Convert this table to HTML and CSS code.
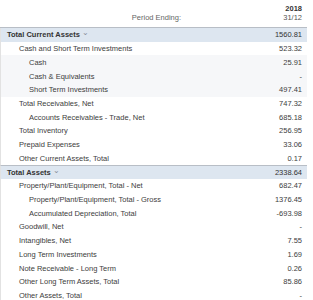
FILE: index.html
```html
<!DOCTYPE html>
<html>
<head>
<meta charset="utf-8">
<link rel="stylesheet" href="styles.css">
</head>
<body>
<div class="table">
  <div class="head">
    <div class="period">Period Ending:</div>
    <div class="val"><div class="year">2018</div><div class="date">31/12</div></div>
  </div>
  <div class="row total first"><div class="label l0">Total Current Assets <span class="chev">&#8964;</span></div><div class="val">1560.81</div></div>
  <div class="row"><div class="label l1">Cash and Short Term Investments</div><div class="val">523.32</div></div>
  <div class="row tint"><div class="label l2">Cash</div><div class="val">25.91</div></div>
  <div class="row tint"><div class="label l2">Cash &amp; Equivalents</div><div class="val">-</div></div>
  <div class="row tint"><div class="label l2">Short Term Investments</div><div class="val">497.41</div></div>
  <div class="row"><div class="label l1">Total Receivables, Net</div><div class="val">747.32</div></div>
  <div class="row"><div class="label l2">Accounts Receivables - Trade, Net</div><div class="val">685.18</div></div>
  <div class="row"><div class="label l1">Total Inventory</div><div class="val">256.95</div></div>
  <div class="row"><div class="label l1">Prepaid Expenses</div><div class="val">33.06</div></div>
  <div class="row"><div class="label l1">Other Current Assets, Total</div><div class="val">0.17</div></div>
  <div class="row total"><div class="label l0">Total Assets <span class="chev">&#8964;</span></div><div class="val">2338.64</div></div>
  <div class="row"><div class="label l1">Property/Plant/Equipment, Total - Net</div><div class="val">682.47</div></div>
  <div class="row"><div class="label l2">Property/Plant/Equipment, Total - Gross</div><div class="val">1376.45</div></div>
  <div class="row"><div class="label l2">Accumulated Depreciation, Total</div><div class="val">-693.98</div></div>
  <div class="row"><div class="label l1">Goodwill, Net</div><div class="val">-</div></div>
  <div class="row"><div class="label l1">Intangibles, Net</div><div class="val">7.55</div></div>
  <div class="row"><div class="label l1">Long Term Investments</div><div class="val">1.69</div></div>
  <div class="row"><div class="label l1">Note Receivable - Long Term</div><div class="val">0.26</div></div>
  <div class="row"><div class="label l1">Other Long Term Assets, Total</div><div class="val">85.86</div></div>
  <div class="row"><div class="label l1">Other Assets, Total</div><div class="val">-</div></div>
</div>
</body>
</html>
```
FILE: styles.css
```css
html, body {
  margin: 0;
  padding: 0;
  background: #fff;
}
body {
  font-family: "Liberation Sans", Arial, sans-serif;
  font-size: 7.5px;
  color: #3d3d3d;
}
.table {
  width: 307px;
}
.head {
  display: flex;
  height: 27px;
  border-bottom: 1px solid #b8bec6;
}
.head .period {
  flex: none;
  width: 181px;
  text-align: right;
  padding-top: 13px;
  color: #666;
}
.head .val {
  margin-left: auto;
  padding-top: 4px;
  text-align: right;
}
.year {
  font-weight: bold;
  color: #333;
  line-height: 9px;
}
.date {
  color: #555;
  line-height: 10px;
}
.row {
  display: flex;
  align-items: center;
  height: 13.72px;
  border-left: 1px solid #e2e2e2;
  box-sizing: border-box;
}
.label {
  flex: 1;
  white-space: nowrap;
}
.val {
  width: 45px;
  text-align: right;
  padding-right: 5px;
}
.l0 { padding-left: 6px; }
.l1 { padding-left: 18px; }
.l2 { padding-left: 28px; }
.total {
  background: #dde6f0;
  font-weight: bold;
  color: #333;
}
.total .val {
  font-weight: normal;
}
.total:not(.first) {
  border-top: 1px solid #b8bec6;
}
.tint {
  background: #f6f7f9;
}
.chev {
  font-weight: normal;
  color: #8a9099;
  font-size: 8px;
  position: relative;
  top: -2px;
}
```
